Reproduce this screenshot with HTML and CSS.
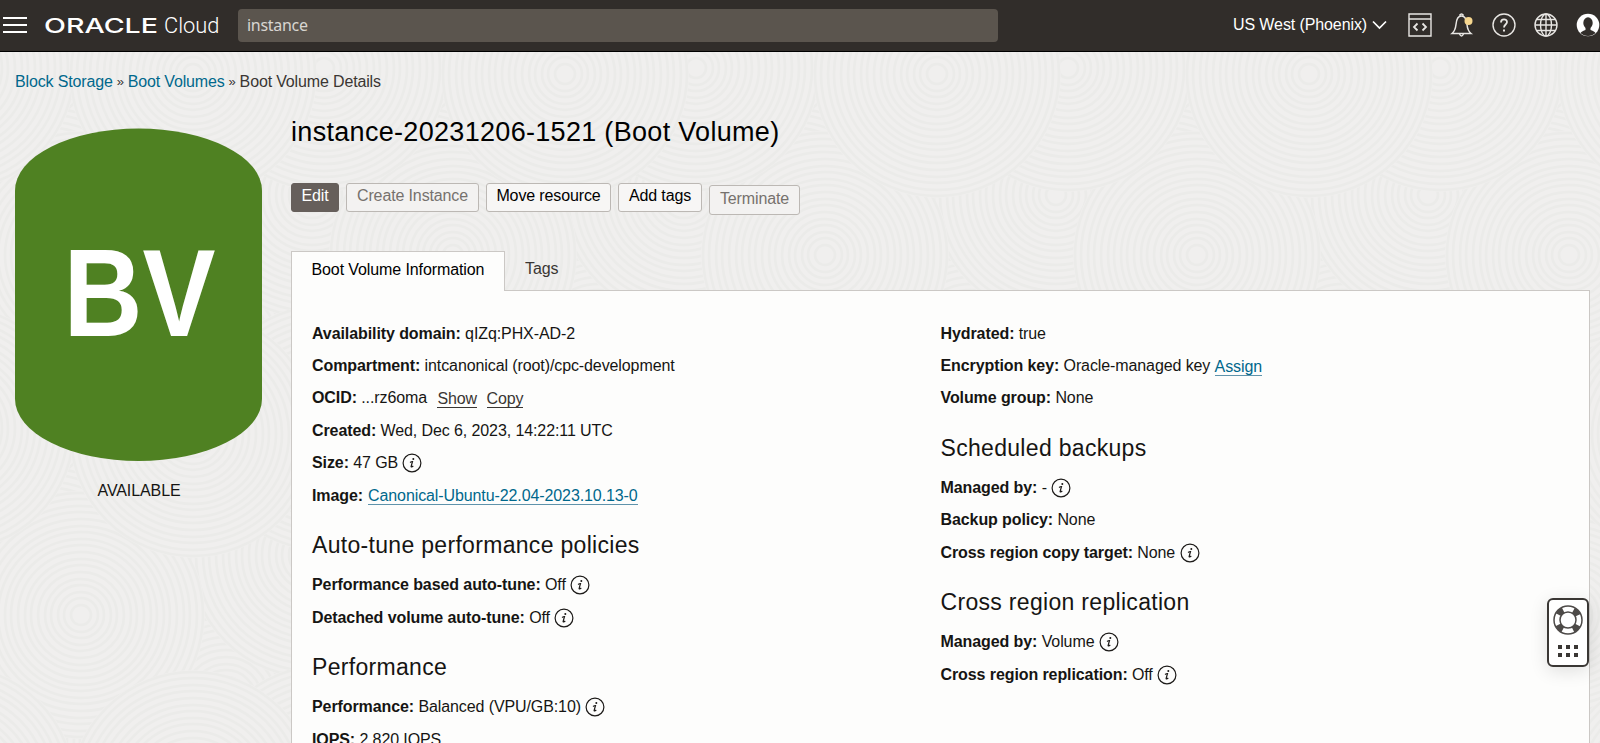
FILE: index.html
```
<!DOCTYPE html>
<html lang="en">
<head>
<meta charset="utf-8">
<title>Boot Volume Details</title>
<link rel="stylesheet" href="styles.css">
</head>
<body>
<svg class="texture" width="1600" height="743" aria-hidden="true">
  <defs>
    <g id="rings">
      <circle r="124" class="ring-base"/>
      <circle r="122"/><circle r="116"/><circle r="109"/><circle r="103"/><circle r="96"/><circle r="89"/><circle r="83"/><circle r="76"/><circle r="70"/><circle r="63"/><circle r="56"/><circle r="50"/><circle r="43"/><circle r="36"/><circle r="30"/><circle r="23"/><circle r="17"/><circle r="10"/>
    </g>
    <pattern id="waves" x="820" y="50" width="372" height="360" patternUnits="userSpaceOnUse">
      <g class="ring-set">
        <use href="#rings" x="300" y="330"/><use href="#rings" x="-72" y="330"/><use href="#rings" x="300" y="-30"/><use href="#rings" x="-72" y="-30"/>
        <use href="#rings" x="150" y="290"/><use href="#rings" x="150" y="-70"/>
        <use href="#rings" x="340" y="180"/><use href="#rings" x="-32" y="180"/>
        <use href="#rings" x="236" y="145"/>
        <use href="#rings" x="5" y="205"/><use href="#rings" x="377" y="205"/>
        <use href="#rings" x="248" y="18"/><use href="#rings" x="248" y="378"/><use href="#rings" x="-124" y="18"/><use href="#rings" x="-124" y="378"/>
        <use href="#rings" x="117" y="24"/><use href="#rings" x="117" y="384"/><use href="#rings" x="489" y="24"/>
      </g>
    </pattern>
    <symbol id="info" viewBox="0 0 20 20">
      <circle cx="10" cy="10" r="8.900" fill="none" stroke="#1c1a18" stroke-width="1.200"/>
      <circle cx="11.300" cy="6" r="1" fill="#1c1a18"/>
      <path d="M8 9.400q1.400-.9 2.500-.9l-1.400 5q-.1 1.200 2.200-.5" fill="none" stroke="#1c1a18" stroke-width="1.200"/>
    </symbol>
  </defs>
  <rect width="1600" height="743" fill="url(#waves)"/>
</svg>

<header class="topbar">
  <svg class="menu" width="25" height="18" viewBox="0 0 25 18"><path d="M0 2h24M0 9h24M0 16h24" stroke="#fff" stroke-width="2"/></svg>
  <svg class="logo" width="180" height="30" viewBox="0 0 180 30">
    <text class="brand" x="0" y="22.500" textLength="114" lengthAdjust="spacingAndGlyphs">ORACLE</text>
    <text class="product" x="120" y="23" textLength="55.500" lengthAdjust="spacingAndGlyphs">Cloud</text>
  </svg>
  <div class="search">instance</div>
  <div class="region">US West (Phoenix)
    <svg width="15" height="10" viewBox="0 0 15 10"><path d="M1 1.500l6.500 6.500L14 1.500" fill="none" stroke="#fff" stroke-width="1.700"/></svg>
  </div>
  <div class="tools">
    <svg width="24" height="24" viewBox="0 0 24 24" fill="none" stroke="#e8e6e3" stroke-width="1.400"><path d="M1 1h22v22H1zM1 6h22"/><path d="M9.500 10.500l-3.500 3.500 3.500 3.500M14.500 10.500l3.500 3.500-3.500 3.500" stroke-width="1.800"/></svg>
    <svg width="24" height="24" viewBox="0 0 24 24" fill="none" stroke="#e8e6e3" stroke-width="1.500"><path d="M2 20.500c3-2.500 3.500-4.500 4-9 .4-5.500 2-8.500 5.500-8.500s5 3 5.500 8.500c.4 4.500 1 6.500 4 9zM9.500 2.500q2-3 4 0M9.500 21q2 4 4 0"/><circle cx="18.500" cy="8" r="4" fill="#f6d68e" stroke="none"/></svg>
    <svg width="24" height="24" viewBox="0 0 24 24" fill="none" stroke="#e8e6e3" stroke-width="1.400"><circle cx="12" cy="12" r="11"/><path d="M9 9.500c0-4 6-4 6-.5 0 2.500-3 2.500-3 5.500" stroke-width="1.800"/><path d="M12 16.500v2" stroke-width="2"/></svg>
    <svg width="24" height="24" viewBox="0 0 24 24" fill="none" stroke="#e8e6e3" stroke-width="1.400"><circle cx="12" cy="12" r="11"/><ellipse cx="12" cy="12" rx="5.500" ry="11"/><path d="M12 1v22M1 12h22M3 6.500h18M3 17.500h18"/></svg>
    <svg width="24" height="24" viewBox="0 0 24 24"><circle cx="12" cy="12" r="11.300" fill="#fff"/><path d="M9.500 14v3c-2 .8-4 1.500-5 3 4 4 11 4 15 0-1-1.500-3-2.200-5-3v-3z" fill="#312d2a"/><ellipse cx="12" cy="10" rx="4.700" ry="5.700" fill="#312d2a"/></svg>
  </div>
</header>

<nav class="crumbs"><a>Block Storage</a><i>»</i><a>Boot Volumes</a><i>»</i><span>Boot Volume Details</span></nav>

<div class="page">
  <aside class="badge-col">
    <svg width="247" height="333" viewBox="0 0 247 333">
      <path d="M0 62.500A123.500 62 0 0 1 247 62.500V271A123.500 62 0 0 1 0 271z" fill="#4f8122"/>
      <text class="badge-text" x="48.500" y="207.500" textLength="152" lengthAdjust="spacingAndGlyphs">BV</text>
    </svg>
    <div class="state">AVAILABLE</div>
  </aside>
  <main class="main">
    <h1>instance-20231206-1521 (Boot Volume)</h1>
    <div class="actions">
      <button class="btn primary w-edit">Edit</button>
      <button class="btn off w-create">Create Instance</button>
      <button class="btn w-move">Move resource</button>
      <button class="btn w-tags">Add tags</button>
      <button class="btn off w-term">Terminate</button>
    </div>
    <div class="tabs"><div class="tab active">Boot Volume Information</div><div class="tab">Tags</div></div>
    <section class="panel">
      <div class="col">
        <p><b>Availability domain:</b> qIZq:PHX-AD-2</p>
        <p><b>Compartment:</b> intcanonical (root)/cpc-development</p>
        <p><b>OCID:</b> ...rz6oma <a class="dark">Show</a><a class="dark">Copy</a></p>
        <p><b>Created:</b> Wed, Dec 6, 2023, 14:22:11 UTC</p>
        <p><b>Size:</b> 47 GB <svg class="info"><use href="#info"/></svg></p>
        <p><b class="before-link">Image:</b><a>Canonical-Ubuntu-22.04-2023.10.13-0</a></p>
        <h2>Auto-tune performance policies</h2>
        <p><b>Performance based auto-tune:</b> Off <svg class="info"><use href="#info"/></svg></p>
        <p><b>Detached volume auto-tune:</b> Off <svg class="info"><use href="#info"/></svg></p>
        <h2>Performance</h2>
        <p><b>Performance:</b> Balanced (VPU/GB:10) <svg class="info"><use href="#info"/></svg></p>
        <p><b>IOPS:</b> 2,820 IOPS</p>
      </div>
      <div class="col">
        <p><b>Hydrated:</b> true</p>
        <p><b>Encryption key:</b> Oracle-managed key <a>Assign</a></p>
        <p><b>Volume group:</b> None</p>
        <h2>Scheduled backups</h2>
        <p><b>Managed by:</b> - <svg class="info"><use href="#info"/></svg></p>
        <p><b>Backup policy:</b> None</p>
        <p><b>Cross region copy target:</b> None <svg class="info"><use href="#info"/></svg></p>
        <h2>Cross region replication</h2>
        <p><b>Managed by:</b> Volume <svg class="info"><use href="#info"/></svg></p>
        <p><b>Cross region replication:</b> Off <svg class="info"><use href="#info"/></svg></p>
      </div>
    </section>
  </main>
</div>

<div class="help">
  <svg width="30" height="30" viewBox="0 0 30 30" fill="none" stroke="#4d4a48"><circle cx="15" cy="15" r="11" stroke-width="6" stroke-dasharray="6.600 10.679" stroke-dashoffset="-5.340"/><circle cx="15" cy="15" r="14" stroke-width="1.500"/><circle cx="15" cy="15" r="8" stroke-width="1.500"/></svg>
  <svg width="20" height="12" viewBox="0 0 20 12" fill="#3a3734"><path d="M0 0h4v4H0zM8 0h4v4H8zM16 0h4v4h-4zM0 8h4v4H0zM8 8h4v4H8zM16 8h4v4h-4z"/></svg>
</div>
</body>
</html>
```
FILE: styles.css
```
* { box-sizing: border-box; }
body { margin: 0; height: 743px; overflow: hidden; position: relative; background: #f0efee; color: #161513; font: 16px/20px "Liberation Sans", Arial, sans-serif; letter-spacing: -0.1px; }
svg { display: block; flex: none; }
.texture { position: absolute; left: 0; top: 0; z-index: -1; }
.ring-set { fill: none; stroke: #ebebe9; stroke-width: 2.500; }
.ring-base { fill: #f0efee; stroke: none; }

.topbar { display: flex; align-items: center; height: 52px; background: #312d2a; border-bottom: 1px solid #000; color: #fff; padding-left: 3px; }
.menu { margin: -2px 16px 0 0; }
.logo { margin-top: -1px; }
.brand { font: 500 20px Inter, sans-serif; fill: #fff; letter-spacing: 0; }
.product { font: 300 22px Roboto, sans-serif; fill: #fff; letter-spacing: 0; }
.search { width: 760px; height: 33px; margin: -1px 0 0 14px; padding-left: 9px; border-radius: 4px; background: #5b554e; color: #d8d5d1; font: 16px/32px "Noto Sans", sans-serif; letter-spacing: -0.300px; }
.region { display: flex; align-items: center; gap: 5px; width: 155px; margin: -1px 20px 0 235px; white-space: nowrap; letter-spacing: -0.100px; }
.tools { display: flex; gap: 18px; margin-top: -1px; }

.crumbs { display: flex; height: 60px; padding: 20px 0 0 15px; color: #3a3633; letter-spacing: -0.150px; }
.crumbs i { width: 15px; text-align: center; font-style: normal; font-size: 13px; }
a { color: #00688c; }

.page { display: flex; padding-left: 15px; }
.badge-col { width: 276px; padding-top: 16px; }
.badge-text { font: 700 124.500px "Liberation Sans", Arial, sans-serif; fill: #fff; letter-spacing: 0; }
.state { width: 248px; padding-top: 20px; text-align: center; letter-spacing: -0.100px; }
.main { width: 1299px; }
h1 { margin: 0; padding-top: 3px; font-size: 27px; line-height: 34px; font-weight: 400; letter-spacing: 0.310px; color: #000; }
.actions { display: flex; gap: 7px; padding-top: 34px; height: 102px; }
.btn { height: 29px; padding: 0 0 3px; border: 1px solid #bcb8b4; border-radius: 3px; background: #f7f6f5; color: #000; font: inherit; letter-spacing: -0.130px; }
.primary { background: #665f5b; border-color: #665f5b; color: #fff; }
.off { color: #76716d; background: #f3f2f1; }
.w-edit { width: 48px; }
.w-create { width: 133px; }
.w-move { width: 125px; }
.w-tags { width: 84px; }
.w-term { width: 91px; height: 30px; margin-top: 2px; }
.tabs { display: flex; height: 39px; position: relative; z-index: 1; }
.tab { padding: 8px 20px 0; color: #3a3633; }
.active { width: 214px; height: 40px; background: #fdfdfc; border: 1px solid #cbc8c5; border-bottom: 0; color: #000; padding: 8px 19px 0 19.500px; }
.panel { display: flex; height: 453px; overflow: hidden; background: #fdfdfc; border: 1px solid #cbc8c5; border-bottom: 0; padding: 26.500px 0 0 20px; }
.col { width: 628.500px; flex: none; }
.col p { display: flex; align-items: center; margin: 0; height: 32.400px; white-space: pre; }
.col b { letter-spacing: -0.090px; }
.col .before-link { margin-right: 5px; }
.col h2 { margin: 0; padding-top: 19px; height: 57.200px; font-size: 23px; line-height: 29px; font-weight: 400; letter-spacing: 0.310px; }
.col a { height: 19px; line-height: 19px; border-bottom: 1px solid #5f93ab; }
.col .dark { color: #3a3633; border-color: #3a3633; margin-left: 6px; }
.col .dark + .dark { margin-left: 9.500px; }
.info { width: 20px; height: 20px; }

.help { position: absolute; left: 1547px; top: 598px; width: 42px; height: 69px; display: flex; flex-direction: column; align-items: center; gap: 10px; padding-top: 5px; background: #fff; border: 2px solid #3a3734; border-radius: 6px; box-shadow: 0 4px 18px rgba(0, 0, 0, 0.120); }
```
